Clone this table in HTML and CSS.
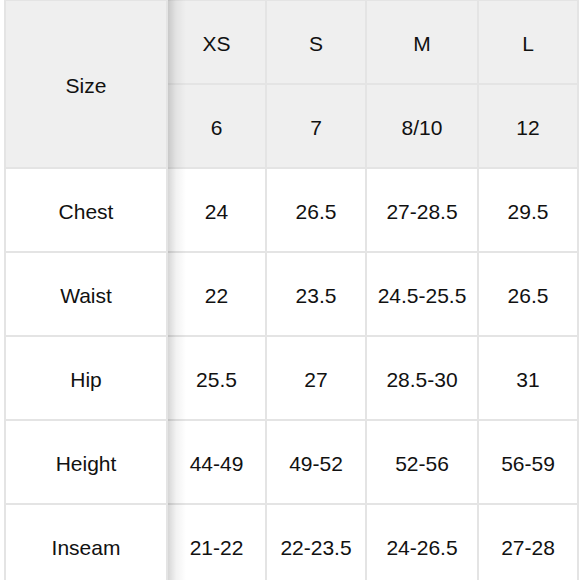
FILE: index.html
```html
<!DOCTYPE html>
<html>
<head>
<meta charset="utf-8">
<link rel="stylesheet" href="styles.css">
</head>
<body>
<div class="wrap">
<table class="chart">
  <colgroup>
    <col class="c-label">
    <col class="c-xs">
    <col class="c-s">
    <col class="c-m">
    <col class="c-l">
  </colgroup>
  <thead>
    <tr>
      <th class="label" rowspan="2">Size</th>
      <th>XS</th><th>S</th><th>M</th><th>L</th>
    </tr>
    <tr>
      <th>6</th><th>7</th><th>8/10</th><th>12</th>
    </tr>
  </thead>
  <tbody>
    <tr><th class="label">Chest</th><td>24</td><td>26.5</td><td>27-28.5</td><td>29.5</td></tr>
    <tr><th class="label">Waist</th><td>22</td><td>23.5</td><td>24.5-25.5</td><td>26.5</td></tr>
    <tr><th class="label">Hip</th><td>25.5</td><td>27</td><td>28.5-30</td><td>31</td></tr>
    <tr><th class="label">Height</th><td>44-49</td><td>49-52</td><td>52-56</td><td>56-59</td></tr>
    <tr><th class="label">Inseam</th><td>21-22</td><td>22-23.5</td><td>24-26.5</td><td>27-28</td></tr>
  </tbody>
</table>
<div class="shadow"></div>
</div>
</body>
</html>
```
FILE: styles.css
```css
html, body {
  margin: 0;
  padding: 0;
  background: #ffffff;
  overflow: hidden;
}
.wrap {
  position: relative;
  margin-left: 4px;
  width: 575px;
}
.chart {
  border-collapse: separate;
  border-spacing: 0;
  table-layout: fixed;
  width: 575px;
  border-top: 1px solid #e4e4e4;
  border-left: 2px solid #e4e4e4;
  font-family: "Liberation Sans", Arial, sans-serif;
  font-size: 21px;
  color: #111111;
}
.c-label { width: 162px; }
.c-xs { width: 99px; }
.c-s { width: 100px; }
.c-m { width: 112px; }
.c-l { width: 100px; }
.chart th, .chart td {
  box-sizing: border-box;
  height: 84px;
  padding: 3px 0 0;
  text-align: center;
  vertical-align: middle;
  font-weight: normal;
  border-right: 2px solid #e4e4e4;
  border-bottom: 2px solid #e4e4e4;
}
.chart thead th {
  background: #efefef;
}
.chart tbody th, .chart tbody td {
  background: #ffffff;
}
.shadow {
  position: absolute;
  top: 0;
  left: 164px;
  width: 18px;
  height: 100%;
  background: linear-gradient(to right, rgba(0,0,0,0.16), rgba(0,0,0,0.05) 45%, rgba(0,0,0,0));
  pointer-events: none;
}
```
